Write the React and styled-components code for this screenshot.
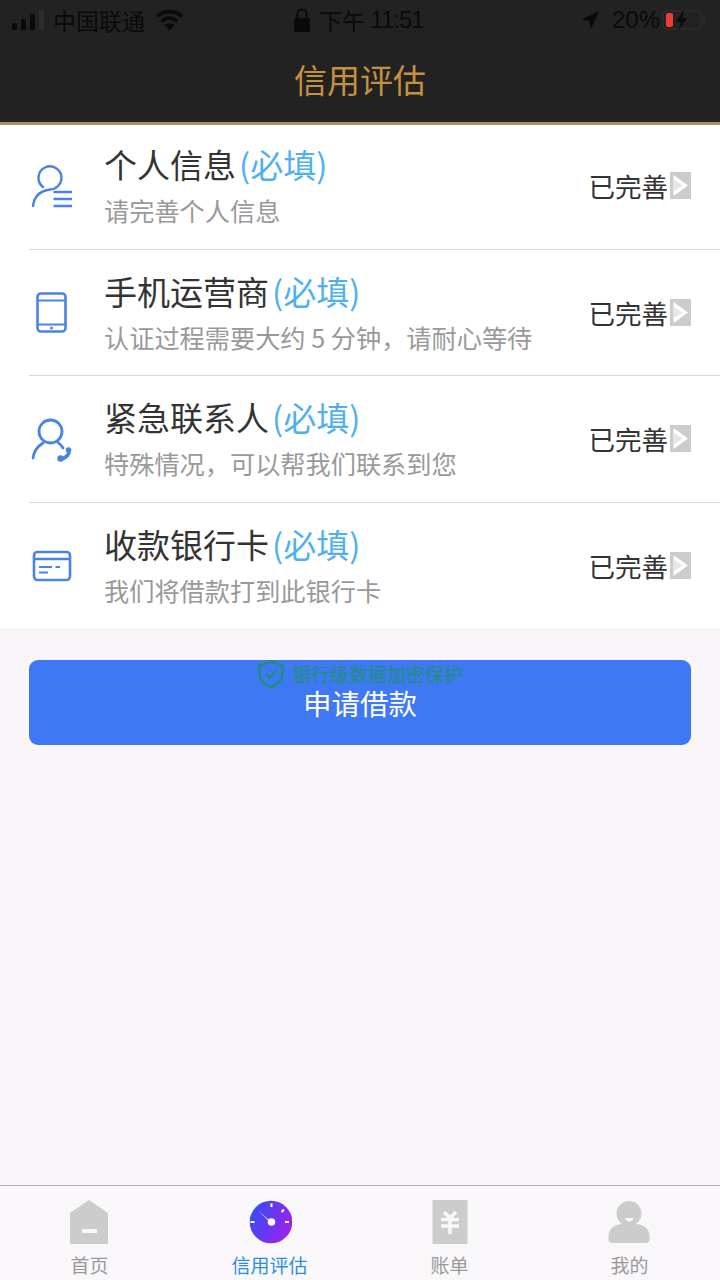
import React from "react";
import styled, { createGlobalStyle } from "styled-components";

const Global = createGlobalStyle`
  html, body { margin: 0; padding: 0; background: #f9f5f9; }
  body { font-family: "Noto Sans CJK SC", "Noto Sans", sans-serif; }
`;

const Page = styled.div`
  width: 720px;
  height: 1280px;
  display: flex;
  flex-direction: column;
  overflow: hidden;
  background: #f9f5f9;
`;

const Header = styled.header`
  position: relative;
  z-index: 1;
  height: 122px;
  flex: none;
  background: #222222;
  border-bottom: 3px solid #a8905f;
  display: flex;
  flex-direction: column;
`;

const StatusBar = styled.div`
  height: 40px;
  padding: 0 14px 0 12px;
  display: grid;
  grid-template-columns: 1fr auto 1fr;
  align-items: center;
  color: #0a0a0a;
  font-size: 23px;
  line-height: 40px;
`;

const StatusGroup = styled.div`
  display: flex;
  align-items: center;
  gap: ${(p) => p.$gap || 8}px;
  justify-content: ${(p) => (p.$end ? "flex-end" : "flex-start")};
`;

const Time = styled.span`
  font-size: 23px;
  line-height: 40px;
  display: flex;
  gap: 5px;
`;

const Digits = styled.span`
  font-family: "Liberation Sans", sans-serif;
  font-size: 24px;
  letter-spacing: -1px;
`;

const Percent = styled.span`
  font-family: "Liberation Sans", sans-serif;
  font-size: 24px;
`;

const Title = styled.h1`
  margin: 0;
  text-align: center;
  font-size: 33px;
  font-weight: 400;
  color: #c4923f;
  line-height: 79px;
`;

const List = styled.section`
  background: #fff;
  flex: none;
  height: 505px;
  margin-top: -2px;
  display: flex;
  flex-direction: column;
`;

const Row = styled.div`
  height: 126.5px;
  flex: none;
  box-sizing: border-box;
  margin-left: 29px;
  display: flex;
  align-items: stretch;
  border-bottom: ${(p) => (p.$last ? "none" : "1px solid #d9d9d9")};
`;

const IconCell = styled.div`
  width: 46px;
  flex: none;
  display: flex;
  align-items: center;
  padding-top: 2px;
  color: #4b82e8;
`;

const RowText = styled.div`
  flex: 1;
  min-width: 0;
  padding-left: 29px;
  padding-top: 18px;
`;

const RowTitle = styled.div`
  font-size: 33px;
  line-height: 46px;
  color: #333;
  white-space: nowrap;
`;

const Required = styled.span`
  color: #4fb0f0;
  margin-left: 3px;
`;

const RowSub = styled.div`
  margin-top: 5px;
  font-size: 25.2px;
  line-height: 36px;
  color: #999;
  white-space: nowrap;
`;

const RowStatus = styled.div`
  display: flex;
  align-items: center;
  padding-right: 29px;
  font-size: 26.5px;
  color: #333;
  gap: 2px;
  white-space: nowrap;
`;

const ArrowBox = styled.svg`
  width: 21px;
  height: 27px;
  flex: none;
`;

const ButtonArea = styled.div`
  flex: 1;
  padding: 32px 29px 0;
`;

const ApplyButton = styled.button`
  position: relative;
  display: block;
  width: 100%;
  height: 85px;
  border: none;
  border-radius: 9px;
  background: #3f78f5;
  color: #fff;
  font-family: inherit;
  font-size: 28.5px;
  padding: 0;
  line-height: 85px;
`;

const SecureNote = styled.div`
  position: absolute;
  left: 228px;
  top: 0;
  display: flex;
  align-items: center;
  gap: 7px;
  height: 28px;
  font-size: 19px;
  line-height: 28px;
  color: #1f8f74;
  white-space: nowrap;
`;

const TabBar = styled.nav`
  height: 95px;
  flex: none;
  box-sizing: border-box;
  background: #f9f7fa;
  border-top: 1px solid #b5b0b5;
  display: grid;
  grid-template-columns: 179px 181px 179px 181px;
`;

const Tab = styled.div`
  display: flex;
  flex-direction: column;
  align-items: center;
  padding-top: 14px;
  font-size: 19px;
  line-height: 28px;
  color: ${(p) => (p.$active ? "#2e8ce6" : "#999")};
`;

const TabIcon = styled.svg`
  width: 44px;
  height: 44px;
  flex: none;
  margin-bottom: 7px;
`;

const PersonListIcon = () => (
  <svg width="44" height="46" viewBox="0 0 44 46" fill="none" stroke="currentColor" strokeWidth="2.4" strokeLinecap="round">
    <path d="M4 42 C5 33 11 27 21 25.5 C27 25.5 32.5 20 32.5 14 A11.5 11.5 0 1 0 14 23" />
    <path d="M24.5 28H43M24.5 35H43M24.5 42H43" strokeLinecap="butt" />
  </svg>
);

const TabletIcon = () => (
  <svg width="44" height="46" viewBox="0 0 44 46" fill="none" stroke="currentColor" strokeWidth="2.6">
    <rect x="8.5" y="3.5" width="28" height="38" rx="3.5" />
    <path d="M8.5 10.5H36.5M8.5 34.5H36.5" strokeWidth="2.2" />
    <circle cx="22.5" cy="38" r="1.5" fill="currentColor" stroke="none" />
  </svg>
);

const PersonPhoneIcon = () => (
  <svg width="44" height="46" viewBox="0 0 44 46" fill="none" stroke="currentColor" strokeWidth="2.8" strokeLinecap="round">
    <circle cx="21.5" cy="14.5" r="11.5" />
    <path d="M4 41 C5 34 9 29 14 26 M29 25.5 C31 27 33 29 34 31" />
    <path d="M40 32.5 C41 37 37 41.5 31.5 42" strokeWidth="3.4" />
    <circle cx="39.5" cy="33" r="2.8" fill="currentColor" stroke="none" />
    <circle cx="31.5" cy="41.5" r="3.2" fill="currentColor" stroke="none" />
  </svg>
);

const CardIcon = () => (
  <svg width="44" height="46" viewBox="0 0 44 46" fill="none" stroke="currentColor" strokeWidth="2.6">
    <rect x="5" y="8" width="36" height="28" rx="3.5" />
    <path d="M5 15H41" />
    <path d="M10 23H23M10 28.5H19M26.5 23H31" strokeWidth="2.2" />
  </svg>
);

const Arrow = () => (
  <ArrowBox viewBox="0 0 21 27">
    <rect width="21" height="27" fill="#cccccc" />
    <path d="M3.5 3 L18 13.5 L3.5 24 Z" fill="#ffffff" />
    <path d="M3.5 7.5 L12.5 13.5 L3.5 19.5 Z" fill="#e6e6e6" />
  </ArrowBox>
);

const rows = [
  { title: "个人信息", sub: "请完善个人信息", Icon: PersonListIcon },
  { title: "手机运营商", sub: "认证过程需要大约 5 分钟，请耐心等待", Icon: TabletIcon },
  { title: "紧急联系人", sub: "特殊情况，可以帮我们联系到您", Icon: PersonPhoneIcon },
  { title: "收款银行卡", sub: "我们将借款打到此银行卡", Icon: CardIcon },
];

export default function App() {
  return (
    <Page>
      <Global />
      <Header>
        <StatusBar>
          <StatusGroup $gap={9}>
            <svg width="32" height="20" viewBox="0 0 32 20" fill="#0a0a0a">
              <rect x="0" y="13" width="5" height="7" rx="1.5" />
              <rect x="9" y="9" width="5" height="11" rx="1.5" />
              <rect x="18" y="4" width="5" height="16" rx="1.5" />
              <rect x="27" y="0" width="5" height="20" rx="1.5" fill="#2c2c2c" />
            </svg>
            <span>中国联通</span>
            <svg width="29" height="22" viewBox="0 0 29 22" fill="none" stroke="#0a0a0a" strokeWidth="3.6" style={{ marginLeft: 1 }}>
              <path d="M2 7.5 C9.5 1 19.5 1 27 7.5" />
              <path d="M6.5 12.5 C11.5 8 17.5 8 22.5 12.5" />
              <path d="M14.5 21.5 L9.5 16 C12 14 17 14 19.5 16 Z" fill="#0a0a0a" stroke="none" />
            </svg>
          </StatusGroup>
          <StatusGroup $gap={9}>
            <svg width="16" height="26" viewBox="0 0 16 26" fill="none">
              <path d="M3.5 12 V7 A4.5 4.5 0 0 1 12.5 7 V12" stroke="#0a0a0a" strokeWidth="2.2" />
              <rect x="0" y="11" width="16" height="14" rx="1.5" fill="#0a0a0a" />
            </svg>
            <Time>下午<Digits>11:51</Digits></Time>
          </StatusGroup>
          <StatusGroup $end $gap={6}>
            <svg width="20" height="20" viewBox="0 0 20 20" fill="#0a0a0a" style={{ marginRight: 6 }}>
              <path d="M19 1 L1 9.5 L9 11 L11 19 Z" />
            </svg>
            <Percent>20%</Percent>
            <svg width="44" height="24" viewBox="0 0 44 24" fill="none" style={{ marginLeft: -4 }}>
              <rect x="1" y="3" width="38" height="18" rx="4" stroke="#2c2c2c" strokeWidth="1.6" />
              <rect x="41" y="9" width="2" height="6" fill="#2c2c2c" />
              <rect x="4" y="5" width="7" height="14" rx="2" fill="#ee3b33" />
              <path d="M21 3 L14 14 H19 L17 22 L25 10 H20 L22 3 Z" fill="#0a0a0a" />
            </svg>
          </StatusGroup>
        </StatusBar>
        <Title>信用评估</Title>
      </Header>
      <List>
        {rows.map(({ title, sub, Icon }, i) => (
          <Row key={title} $last={i === rows.length - 1}>
            <IconCell><Icon /></IconCell>
            <RowText>
              <RowTitle>{title}<Required>(必填)</Required></RowTitle>
              <RowSub>{sub}</RowSub>
            </RowText>
            <RowStatus>已完善<Arrow /></RowStatus>
          </Row>
        ))}
      </List>
      <ButtonArea>
        <ApplyButton>
          <SecureNote>
            <svg width="28" height="28" viewBox="0 0 28 28" fill="none" stroke="#1f8f74" strokeWidth="2.4">
              <path d="M14 1.5 L25.5 5.5 V14 C25.5 20 20 24.5 14 27 C8 24.5 2.5 20 2.5 14 V5.5 Z" />
              <path d="M8.5 13.5 L12.5 17.5 L19.5 10.5" />
            </svg>
            银行级数据加密保护
          </SecureNote>
          申请借款
        </ApplyButton>
      </ButtonArea>
      <TabBar>
        <Tab>
          <TabIcon viewBox="0 0 44 44">
            <path d="M2 44 V13 L21 0 L40 13 V44 Z" fill="#cccccc" />
            <rect x="14" y="29" width="15" height="4" fill="#f9f7fa" />
          </TabIcon>
          首页
        </Tab>
        <Tab $active>
          <TabIcon viewBox="0 0 44 44">
            <defs>
              <linearGradient id="dial" x1="0" y1="0.2" x2="1" y2="0.6">
                <stop offset="0" stopColor="#2f50f0" />
                <stop offset="1" stopColor="#a020f0" />
              </linearGradient>
            </defs>
            <circle cx="23" cy="22" r="21.3" fill="url(#dial)" />
            <path d="M23.5 3.5V7M2.5 22H6.5M37 22H41M33.5 12L36 9.5" stroke="#fff" strokeWidth="2" />
            <path d="M10 10.5 L20.5 19.5 L25 25 Z" fill="#fff" />
            <circle cx="23.5" cy="22" r="3.8" fill="#fff" />
          </TabIcon>
          信用评估
        </Tab>
        <Tab>
          <TabIcon viewBox="0 0 44 44">
            <rect x="4.5" y="0" width="35" height="44" fill="#cccccc" />
            <path d="M16 12 L22 18 L28 12 M22 18 V34 M13 19.5 H31 M13 26 H31" stroke="#f9f7fa" strokeWidth="3.6" fill="none" />
          </TabIcon>
          账单
        </Tab>
        <Tab>
          <TabIcon viewBox="0 0 44 44">
            <circle cx="21" cy="13.5" r="12.5" fill="#cccccc" />
            <path d="M0.5 39 V36 C0.5 28 8 24 14 24 H28 C34 24 41.5 28 41.5 36 V39 A4 4 0 0 1 37.5 43 H4.5 A4 4 0 0 1 0.5 39 Z" fill="#cccccc" />
            <path d="M17 18 H25.5 C25 22.5 17.5 22.5 17 18 Z" fill="#f9f7fa" />
          </TabIcon>
          我的
        </Tab>
      </TabBar>
    </Page>
  );
}
